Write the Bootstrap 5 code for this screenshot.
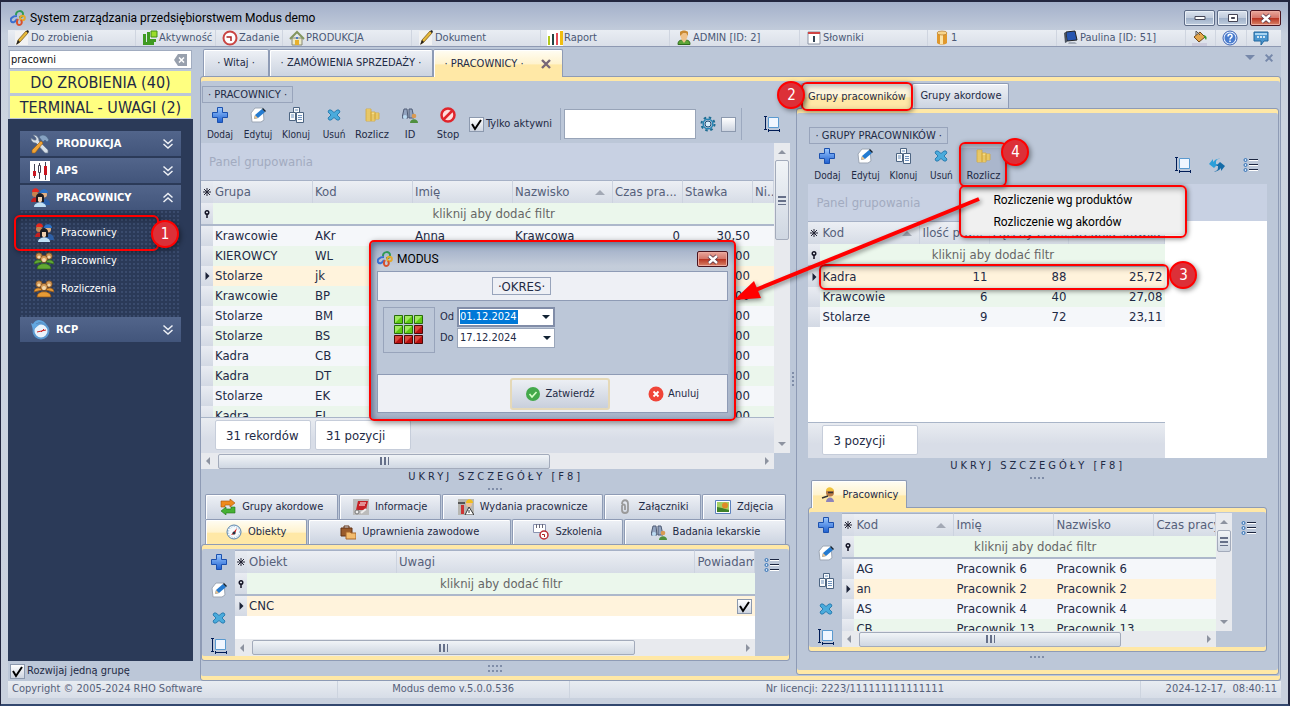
<!DOCTYPE html>
<html lang="pl">
<head>
<meta charset="utf-8">
<meta name="viewport" content="width=device-width, initial-scale=1">
<title>System zarządzania przedsiębiorstwem Modus demo</title>
<link href="https://cdn.jsdelivr.net/npm/bootstrap@5.3.0/dist/css/bootstrap.min.css" rel="stylesheet">
<style>
:root{--face:#bcc7d8;--line:#8e9bb5;--gold:#ffe8a6;--navy:#2b3a58;--ink:#1e2a45;--ui:"DejaVu Sans Condensed","Noto Sans",sans-serif;--title:Roboto,"Open Sans",sans-serif}
body{font-family:var(--ui);font-size:11px;line-height:16px;color:var(--ink);background:var(--face)}
button,input{font:inherit;color:inherit}
button{background:none;border:0;padding:0}
a{color:inherit;text-decoration:none}
svg{display:block;flex:none}
.i16{width:16px;height:16px}
.i20{width:20px;height:20px}
.shell{height:100vh;min-height:640px;border:2px solid #22263f;border-left-width:1px;border-bottom-color:#33486f;padding:0 7px 6px;background:linear-gradient(#a3b0ca 0,#c6cfdd 32px,#ccd4e0 120px,#c9d1de)}
.workarea{background:var(--face);min-height:0}
.titlebar{height:29px;font:12px/16px var(--title);color:#000;padding:3px 0 0 2px}
.winbtn{width:31px;height:16px;border:1px solid #5d6b86;border-radius:2px;background:linear-gradient(#dbe3ee,#c0cbdc 48%,#9fb0c9 52%,#c0cede);box-shadow:inset 0 0 0 1px #e8eef6}
.winbtn.closing{background:linear-gradient(#e8a79c,#d5766a 48%,#b83422 52%,#d98468);border-color:#4a1520;box-shadow:inset 0 0 0 1px #ecaa9f}
.quick{display:grid;grid-template-columns:128fr 80fr 67fr 129fr 129fr 129fr 130fr 128fr 129fr 129fr 30fr 31fr 34fr;height:17px;background:linear-gradient(#e9edf3,#dadfe8);color:#4a5876;border-bottom:1px solid #8e99b2}
.quick a{display:flex;align-items:center;gap:1px;padding-left:6px;border-right:1px solid #cfd5e0;white-space:nowrap}
.quick a:last-child{border:0}
.side{width:185px}
.findbox{height:19px;border:1px solid #a1acc0;background:#fff}
.findbox input{border:0;outline:0;width:100px;padding:0 1px;color:#111}
.notice{background:#ffff80;height:22px;font-size:16px;line-height:24px;text-align:center;margin:0 2px 3px}
.navtree{background:var(--navy);color:#fff;padding:12px 12px 0;margin-top:-2px}
.grp{height:25px;width:100%;background:linear-gradient(#52658b,#42557b);font-weight:700;padding:0 5px 0 10px;margin-bottom:2px;gap:6px;color:#fff}
.dotted{background:radial-gradient(#3a4b6d 1px,transparent 1px) 0 0/4px 4px;padding:9px 0 14px}
.leaf{height:28px;padding-left:14px;gap:7px}
.bubble{position:absolute;width:28px;height:28px;border:2px solid #f00;border-radius:50%;background:#dc3038;color:#fff;font-size:15px;line-height:24px;text-align:center;box-shadow:2px 2px 5px #0006;z-index:6}
.ring{position:absolute;border:2px solid #f00;border-radius:6px;box-shadow:1px 1px 5px #0007,inset 1px 2px 6px #0005;pointer-events:none;z-index:5}
.tabx{height:27px;border:1px solid var(--line);border-bottom:0;border-radius:2px 2px 0 0;background:linear-gradient(#eef1f6,#dde2eb 50%,#ccd4e1);box-shadow:inset 1px 1px #fff;display:flex;align-items:center;justify-content:center;color:var(--ink);white-space:nowrap}
.tabx.sel{background:linear-gradient(#fffdf4,#fff3cf 50%,#ffe8a6 56%,#ffe8a6);height:28px;margin-bottom:-1px;position:relative}
.goldtop{border:1px solid var(--line);border-radius:3px;box-shadow:inset 0 4px var(--gold),inset 0 -4px var(--gold);padding:5px 1px 4px 0}
.cap{border:1px solid #98a4bb;height:17px;line-height:15px;padding:0 5px;align-self:flex-start;white-space:nowrap}
.tool{width:38px;height:36px;display:flex;flex-direction:column;align-items:center;justify-content:space-between;font-size:10px;line-height:12px;padding-bottom:2px}
.tool.wider{font-size:11px}
.pressed{width:46px;background:#aab6cc;position:relative}
.sepv{width:1px;height:32px;background:#9ca9bf}
.chk{appearance:none;width:15px;height:15px;margin:0;border:1px solid #8c99ae;background:linear-gradient(#fff,#cdd4e0);flex:none}
.chk:checked{background:url("data:image/svg+xml,%3Csvg xmlns='http://www.w3.org/2000/svg' viewBox='0 0 13 13'%3E%3Cpath d='M2 6l3 5 6-9' fill='none' stroke='%23000' stroke-width='2'/%3E%3C/svg%3E"),linear-gradient(#fff,#cdd4e0)}
.gpanel{height:37px;background:#c8d1e3;color:#a2abc0;font-size:13px;line-height:38px;padding-left:8px}
.dgrid{table-layout:fixed;border-collapse:separate;border-spacing:0;font-size:13px;line-height:20px;color:var(--ink)}
.dgrid th,.dgrid td{padding:0 2px;overflow:hidden;white-space:nowrap;height:20px}
.dgrid th{font-weight:400;color:#55607a;height:23px;line-height:22px;border-top:1px solid #a6b1c6;border-right:1px solid #ccd3df;background:linear-gradient(#eceff4,#d6dce6);position:relative}
.dgrid .pin{width:12px;background:linear-gradient(#e9ecf2,#d3d9e4);padding:0;text-align:center;border-right:0}
.dgrid .flt td{background:#ebf7ec;color:#666;text-align:center;height:23px;border-bottom:2px solid #adb8cb}
.dgrid tr.a td{background:#f5f7fa}.dgrid tr.b td{background:#ebf6ec}.dgrid tr.s td{background:#fff3dc}
.dgrid tr td.pin{background:linear-gradient(#e9ecf2,#d3d9e4)}
.dgrid .num{text-align:right;padding-right:3px}
.asc::after{content:"";position:absolute;right:7px;top:9px;border:5px solid transparent;border-top:0;border-bottom-color:#a3a9b5}
.foot{background:linear-gradient(#e9ecf1,#d8dde7 60%);border-top:1px solid #a9b5c8;height:36px;padding:2px 0 0 14px;font-size:13px;gap:4px}
.foot span{background:#fff;border:1px solid #c6cdda;width:96px;height:30px;line-height:30px;padding-left:10px;border-radius:2px}
.hbar{height:17px;background:#e8eaee;display:flex;align-items:center;justify-content:space-between;padding:0 5px}
.thumb{background:linear-gradient(#f1f4f7,#cfd7e2);border:1px solid #a3abbb;border-radius:2px;height:15px;display:flex;align-items:center;justify-content:center}
.vbar{width:16px;flex:none;background:#e8eaee;display:flex;flex-direction:column;align-items:center;padding:7px 0}
.vbar .thumb{width:14px}
.lt,.rt,.up,.dn{border:4px solid transparent;width:0;height:0;flex:none}
.lt{border-left:0;border-right-color:#8d93a0}.rt{border-right:0;border-left-color:#8d93a0}.up{border-top:0;border-bottom-color:#8d93a0}.dn{border-bottom:0;border-top-color:#8d93a0}
.grip{width:9px;height:8px;background:repeating-linear-gradient(90deg,#667089 0 2px,transparent 2px 4px);flex:none}
.vbar .grip{width:8px;height:9px;background:repeating-linear-gradient(#667089 0 2px,transparent 2px 4px)}
.hide{letter-spacing:3px;text-align:center;height:16px;width:100%}
.dots{width:15px;height:2px;margin:0 auto;background:repeating-linear-gradient(90deg,#7f8da8 0 2px,transparent 2px 4px)}
.row1{display:grid;grid-template-columns:134fr 102fr 162fr 97fr 85fr;gap:1px}
.row2{display:grid;grid-template-columns:103fr 204fr 112fr 163fr;gap:1px}
.row1 .tabx,.row2 .tabx{height:25px;gap:6px}
.rail{width:33px;gap:12px;padding-top:4px;flex:none}
.listbtn{width:33px;flex:none;display:flex;justify-content:center;padding-top:7px}
.status{display:grid;grid-template-columns:330fr 232fr 572fr 140fr;height:17px;background:linear-gradient(#e9edf2,#d7dde7);color:#56617a}
.status span{padding:0 4px;border-right:1px solid #cdd4df;white-space:nowrap}
.dlg{position:absolute;left:176px;top:193px;width:367px;height:181px;z-index:4;border:2px solid #f00;border-radius:5px;background:linear-gradient(#9aa9c4,#c4cdda 24px,#bcc7d8 60px,#a9b5c9);box-shadow:2px 2px 6px #0007,inset 2px 2px 6px #5a6988;padding:6px}
.strip{background:#eef0f5;border:1px solid #8e9bb5}
.field{width:98px;height:20px;border:1px solid #9aa6ba;background:#fff;padding:0 3px 0 2px}
.field.on{border:2px solid #818da8;padding-left:1px}
.field input{border:0;outline:0;width:58px;padding:0;height:14px;line-height:14px}
.field.on input{background:#0078d7;color:#fff}
.okbtn{width:100px;height:32px;border:2px solid #e5d9b8;border-radius:3px;background:linear-gradient(#eceff4,#c8cfdc)}
.pop{position:absolute;left:0;top:39px;width:226px;height:48px;background:#f0f0f0;z-index:4;font:12px/22px var(--title);color:#000;padding:2px 0}
.pop a{display:block;text-align:left;padding-left:33px;height:22px}
.arrow{position:absolute;left:540px;top:148px;width:250px;height:110px;z-index:7;pointer-events:none;filter:drop-shadow(2px 2px 2px #0006)}
</style>
</head>
<body>
<svg width="0" height="0" class="position-absolute"><defs>
<linearGradient id="gb" x2="0" y2="1"><stop stop-color="#9cc9ff"/><stop offset="1" stop-color="#1e5fd0"/></linearGradient>
<symbol id="logo" viewBox="0 0 16 16"><g fill="none" stroke-width="2"><path d="M6 5c0-5 7-5 7-1s-3 3-4 3" stroke="#2f9a56"/><path d="M7 6c-5 0-7 3-6 5s4 2 6-2" stroke="#3b6fd0"/><circle cx="12.500" cy="8" r="2.300" stroke="#e5a92c"/><path d="M8 9c-2 3-1 6 1 6s4-2 2-5" stroke="#d8502c"/></g></symbol>
<symbol id="note" viewBox="0 0 16 16"><path d="M1 1h13v14H1z" fill="#f2f2f2"/><path d="M3 14l1-4 8-9 2 2-8 9z" fill="#e6b93a" stroke="#6b4a10" stroke-width=".7"/><path d="M2 15l2-5 2 2zM12 1l2-1 1 2-1 1z" fill="#222"/></symbol>
<symbol id="act" viewBox="0 0 16 16"><path d="M1 4h3v8h8v3H1zM5 2h3v7h6v3H5z" fill="#3f9a22"/><path d="M9 1h6v6H9z" fill="#9bdc2a" stroke="#438e18"/></symbol>
<symbol id="clk" viewBox="0 0 16 16"><circle cx="8" cy="8" r="6.500" fill="#fff" stroke="#c94442" stroke-width="2"/><path d="M4.500 7H9v4" fill="none" stroke="#a22" stroke-width="1.500"/></symbol>
<symbol id="house" viewBox="0 0 16 16"><path d="M3 8h10v7H3z" fill="#ecebc8" stroke="#887"/><path d="M1 9l7-7 7 7" fill="none" stroke="#83965f" stroke-width="2"/><path d="M6 10h4v5H6z" fill="#e8b02c"/><path d="M7 7h2v2H7z" fill="#4a7bc6"/></symbol>
<symbol id="bars" viewBox="0 0 16 16"><path d="M0 0h16v16H0z" fill="#fff"/><path d="M1 6h2v9H1z" fill="#b2c81c"/><path d="M5 4h2v11H5z" fill="#244"/><path d="M9 3h2v12H9z" fill="#e34c56"/><path d="M13 1h3v14h-3z" fill="#f0bd10"/></symbol>
<symbol id="usr" viewBox="0 0 16 16"><path d="M2 14.500c0-4 2-4.500 6-4.500s6 .5 6 4.500z" fill="#5ba436" stroke="#2f6b1c"/><path d="M5 9l3 4 3-4z" fill="#efc28a"/><circle cx="8" cy="6" r="3.500" fill="#efc28a"/><path d="M4 6V2c2-2 6-2 8 0v4l-2-3H7z" fill="#c98a33"/></symbol>
<symbol id="cal" viewBox="0 0 16 16"><path d="M2 2h12v12H2z" fill="#fff" stroke="#8b94a5"/><path d="M2 2h12v2H2z" fill="#cf4444"/><path d="M7 6h2v6H7z" fill="#345"/></symbol>
<symbol id="db" viewBox="0 0 16 16"><path d="M3 3v10c2 2 8 2 10 0V3z" fill="#e0982c"/><path d="M6 3h3v11H6z" fill="#fbe3a8"/><ellipse cx="8" cy="3" rx="5" ry="2" fill="#f8d58a" stroke="#a8681c" stroke-width=".6"/></symbol>
<symbol id="mon" viewBox="0 0 16 16"><path d="M3 2l9-1 2 9-10 1z" fill="#2856b0" stroke="#222"/><path d="M1 3l2-1 1 10-2 1z" fill="#4a525f"/><path d="M6 12h6l2 2H5z" fill="#a5adba"/></symbol>
<symbol id="bucket" viewBox="0 0 16 16"><path d="M0 13h15v3H0z" fill="#ccd"/><path d="M2 7l6-5 5 5-6 5z" fill="#e4a64c" stroke="#70491a"/><path d="M12 5c3 1 3 3 2 5l-2-3z" fill="#3b9a31"/><path d="M4 5V1l4 4" fill="none" stroke="#555"/></symbol>
<symbol id="help" viewBox="0 0 16 16"><circle cx="8" cy="8" r="7" fill="#e8f0ff" stroke="#355fb2"/><circle cx="8" cy="8" r="5.500" fill="#4a7dcf"/><path d="M6 6.500c0-3 4.500-3 4 0-.3 1.200-2 1.200-2 3M8 10.500v1.600" fill="none" stroke="#fff" stroke-width="1.500"/></symbol>
<symbol id="chat" viewBox="0 0 16 16"><path d="M1 2h14v9h-4l-3 4v-4H1z" fill="#4b96cf" stroke="#22679d"/><path d="M2 3h12v2H2z" fill="#a9d5f2"/><g fill="#fff"><circle cx="5" cy="7" r="1"/><circle cx="8" cy="7" r="1"/><circle cx="11" cy="7" r="1"/></g></symbol>
<symbol id="plus" viewBox="0 0 16 16"><path d="M5.500.5h5v5h5v5h-5v5h-5v-5h-5v-5h5z" fill="url(#gb)" stroke="#1b50ae"/></symbol>
<symbol id="edit" viewBox="0 0 16 16"><path d="M5 1h8l1 12-3 2H2L1 6z" fill="#fff" stroke="#9da7b5"/><path d="M4 12l1-4 7-6 3 3-7 6z" fill="#257bd0"/><path d="M4 12l1-4 3 3z" fill="#ecc28b"/><path d="M12 2l1-1 3 3-1 1z" fill="#123"/></symbol>
<symbol id="copy" viewBox="0 0 16 16"><g fill="#f8fafc" stroke="#4d6582"><path d="M5.500.5h6v9h-6z"/><path d="M1.500 5.500h6v8h-6z"/><path d="M8.500 5.500h7v10h-7z"/></g><path d="M3 8h3M3 10h3M10 8.500h4M10 10.500h4M10 12.500h4M7 3h3" stroke="#6f92bd"/></symbol>
<symbol id="del" viewBox="0 0 16 16"><path d="M3 3l2 0 3 2.500L11 3h2l1 2-3 3 3 3-1 2h-2L8 10.500 5 13H3l-1-2 3-3-3-3z" fill="#4aabdc" stroke="#2c7fb2"/></symbol>
<symbol id="coins" viewBox="0 0 16 16"><g fill="#f6dc85" stroke="#d3a83c" stroke-width=".8"><path d="M2 2h5v12H2zM7 5h4v9H7zM11 6h4v6h-4z"/><path d="M2 4h5M2 6h5M2 8h5M2 10h5M2 12h5M7 8h4M7 10h4M7 12h4M11 8h4M11 10h4"/></g></symbol>
<symbol id="bino" viewBox="0 0 16 16"><path d="M2 2h3l1 9H0zM7 2h3l2 9H7z" fill="#93a4c0" stroke="#4e5b74"/><circle cx="3" cy="10" r="2" fill="#bcdcf2"/><circle cx="12" cy="9" r="2.300" fill="#d99a53"/><path d="M8 16c0-5 8-5 8 0z" fill="#4f8f3d"/></symbol>
<symbol id="stop" viewBox="0 0 16 16"><circle cx="8" cy="8" r="6.500" fill="#fdd" stroke="#e0242b" stroke-width="2.500"/><path d="M3.500 12.500l9-9" stroke="#e0242b" stroke-width="2.500"/></symbol>
<symbol id="gear" viewBox="0 0 16 16"><circle cx="8" cy="8" r="6.500" fill="none" stroke="#1e6d92" stroke-width="2" stroke-dasharray="2.500 2.600"/><circle cx="8" cy="8" r="4.800" fill="none" stroke="#2585b5" stroke-width="1.500"/><circle cx="8" cy="8" r="3" fill="#d8eefa" stroke="#1c4d75"/></symbol>
<symbol id="size" viewBox="0 0 16 16"><path d="M4.500 1.500h10v10h-10z" fill="#f0f6ff" stroke="#5a9ad0"/><path d="M1.500 1v12M0 .5h3M0 13.500h3M5 14.500h10M4.500 13v3M15.500 13v3" stroke="#001c56"/></symbol>
<symbol id="sync" viewBox="0 0 16 16"><path d="M0 7l4-5v3c2-3 6-4 7-3-4 0-4 2-4 5h2l-4 4z" fill="#2c9fd9"/><path d="M16 9l-4 5v-3c-2 3-6 4-7 3 4 0 4-2 4-5H7l4-4z" fill="#156ca8"/></symbol>
<symbol id="list" viewBox="0 0 16 16"><g fill="#cfe2f7" stroke="#3170b4"><circle cx="2.500" cy="3" r="1.500"/><circle cx="2.500" cy="8" r="1.500"/><circle cx="2.500" cy="13" r="1.500"/></g><path d="M6 2.500h9M6 7.500h9M6 12.500h9" stroke="#1c2640"/><path d="M6 3.500h9M6 8.500h9M6 13.500h9" stroke="#fff"/></symbol>
<symbol id="tools" viewBox="0 0 20 20"><path d="M3 1l3 3v2H4L1 4c0 4 3 5 5 5l9 10h3v-3L9 7c0-3-2-6-6-6z" fill="#d7dfe8" stroke="#69798d" stroke-width=".7"/><path d="M9 3c3-3 6-2 8 0l2 3-2 2-2-2-2 2z" fill="#86a2c2" stroke="#47617f" stroke-width=".6"/><path d="M11 7l2 2L5 19H2v-3z" fill="#f0a436" stroke="#9b5a0e" stroke-width=".6"/></symbol>
<symbol id="aps" viewBox="0 0 20 20"><path d="M0 0h20v20H0z" fill="#fff"/><path d="M4.500 3v14M9.500 2v16M15.500 1v18" stroke="#445"/><path d="M3 10h3v5H3zM14 5h3v9h-3z" fill="#c9151f"/><path d="M8.500 4.500h2v7h-2z" fill="#fff" stroke="#445"/></symbol>
<symbol id="crew" viewBox="0 0 20 20"><path d="M1 14c0-6 8-6 8 0z" fill="#c41f1f"/><path d="M11 17c0-8 9-8 9 0z" fill="#2d5fa6"/><circle cx="5" cy="6" r="3" fill="#c58350"/><circle cx="14" cy="6.500" r="3" fill="#e3b184"/><path d="M2 4c0-5 7-5 7 0zM1 5h8z" fill="#e7281f"/><path d="M10 5c0-5 8-5 8 0z" fill="#2b72c8"/><path d="M6 14V9c0-5 8-5 8 0v5z" fill="#1c1c22"/><path d="M8 9h4v4l-2 2-2-2z" fill="#efcfae"/><path d="M4 19c0-6 12-6 12 0z" fill="#bfe0f6"/></symbol>
<symbol id="pg" viewBox="0 0 20 20"><g fill="#d49b58" stroke="#744319" stroke-width=".7"><circle cx="5" cy="5" r="3.200"/><circle cx="15" cy="5" r="3.200"/><circle cx="10" cy="8" r="3.600"/></g><g fill="#62a934" stroke="#356f18" stroke-width=".7"><path d="M0 13c0-5 7-5 8-2zM20 13c0-5-7-5-8-2zM3 18c0-7 14-7 14 0z"/></g><g fill="#f3d9ae"><circle cx="5" cy="6" r="1.600"/><circle cx="15" cy="6" r="1.600"/><circle cx="10" cy="9" r="2"/></g></symbol>
<symbol id="po" viewBox="0 0 20 20"><g fill="#d49b58" stroke="#744319" stroke-width=".7"><circle cx="5" cy="5" r="3.200"/><circle cx="15" cy="5" r="3.200"/><circle cx="10" cy="8" r="3.600"/></g><g fill="#e89b35" stroke="#935516" stroke-width=".7"><path d="M0 13c0-5 7-5 8-2zM20 13c0-5-7-5-8-2zM3 18c0-7 14-7 14 0z"/></g><g fill="#f3d9ae"><circle cx="5" cy="6" r="1.600"/><circle cx="15" cy="6" r="1.600"/><circle cx="10" cy="9" r="2"/></g></symbol>
<symbol id="rcp" viewBox="0 0 20 20"><circle cx="11" cy="11" r="7.500" fill="#eaf3fb" stroke="#5b99d0" stroke-width="2"/><path d="M1 3l2 7 6-5-3-1c4-3 9-1 11 2-3-7-11-8-14-2z" fill="#62a7e0"/><path d="M7 12l9-2M11 12l3-3" stroke="#c22"/></symbol>
<symbol id="dd" viewBox="0 0 16 16"><path d="M3.500 3.500l4.500 4 4.500-4M3.500 8l4.500 4 4.500-4" fill="none" stroke="#eef1f6" stroke-width="1.500"/></symbol>
<symbol id="du" viewBox="0 0 16 16"><path d="M3.500 7.500l4.500-4 4.500 4M3.500 12l4.500-4 4.500 4" fill="none" stroke="#eef1f6" stroke-width="1.500"/></symbol>
<symbol id="swap" viewBox="0 0 16 16"><path d="M1 8V2h9V0l5 4-5 4V6H5v2z" fill="#ef8a1c" stroke="#a4520c" stroke-width=".6"/><path d="M15 8v6H6v2l-5-4 5-4v2h5V8z" fill="#46b133" stroke="#1e7414" stroke-width=".6"/></symbol>
<symbol id="info" viewBox="0 0 16 16"><path d="M0 0h16v16H0z" fill="#bbb"/><path d="M5 2h10l-2 9H3z" fill="#c61f24"/><path d="M7 4h6M6 6h6" stroke="#fff"/><circle cx="4" cy="13" r="2" fill="#eee" stroke="#777"/><path d="M8 14l5-4" stroke="#eee" stroke-width="2"/></symbol>
<symbol id="haz" viewBox="0 0 16 16"><path d="M0 0h16v16H0z" fill="#b7b7b2"/><path d="M0 3h7v2H0z" fill="#555"/><path d="M3 6h3v9H3z" fill="#c33"/><circle cx="11" cy="5" r="3" fill="#eec296"/><path d="M8 4c0-5 7-5 7 0z" fill="#f0be1d"/><path d="M11 8l5 8H7z" fill="#fff" stroke="#333"/><path d="M11 11v3" stroke="#333"/></symbol>
<symbol id="clip" viewBox="0 0 16 16"><path d="M5 5c0-5 6-5 6 0v6c0 4-6 4-6 0V7c0-2 3-2 3 0v4" fill="none" stroke="#9a9a9a" stroke-width="1.800"/></symbol>
<symbol id="photo" viewBox="0 0 16 16"><path d="M.5 1.500h15v13H.5z" fill="#fff" stroke="#5b80bd"/><path d="M2 3h12v10H2z" fill="#a4cf63"/><path d="M2 8l5 1 7 2v2H2z" fill="#3f8129"/><circle cx="10" cy="6.500" r="3" fill="#e08a26"/></symbol>
<symbol id="gauge" viewBox="0 0 16 16"><circle cx="8" cy="8" r="7" fill="#f6fafc" stroke="#5782ac"/><circle cx="8" cy="8" r="5.500" fill="none" stroke="#8cb4d6" stroke-dasharray="1 1.500"/><path d="M5 11l6-7-2 6z" fill="#c22"/><circle cx="8" cy="9" r="1.500" fill="#234"/></symbol>
<symbol id="brief" viewBox="0 0 16 16"><path d="M1 4h11v8H1z" fill="#9a5b2c" stroke="#633314"/><path d="M4 4V2h5v2" fill="none" stroke="#633314"/><path d="M6 8h4l1 1h5v6H6z" fill="#f3bb6c" stroke="#a8662b"/></symbol>
<symbol id="sched" viewBox="0 0 16 16"><path d="M.5.5h12v8H.500z" fill="#fff" stroke="#8a93b0"/><path d="M3.500 0v4M6.500 0v4M9.500 0v4" stroke="#667"/><circle cx="11" cy="11" r="4" fill="#fff" stroke="#bb2c35" stroke-width="1.500"/><path d="M9 10.500h2.500V13" fill="none" stroke="#a22"/></symbol>
<symbol id="wrk" viewBox="0 0 16 16"><circle cx="9" cy="5.500" r="4" fill="#b97a44"/><path d="M5 4c0-5 7-5 8 0z" fill="#f0c33c"/><path d="M5 15c0-6 8-6 8 0z" fill="#8d84ba"/><path d="M1 11l6-2M7 5.500h5" stroke="#333" stroke-width="1.500"/></symbol>
<symbol id="ok" viewBox="0 0 16 16"><circle cx="8" cy="8" r="7" fill="#43a94b"/><path d="M4.500 8l2.500 3 4.500-5" fill="none" stroke="#d6ffc8" stroke-width="1.600"/></symbol>
<symbol id="no" viewBox="0 0 16 16"><circle cx="8" cy="8" r="7.500" fill="#f04438"/><path d="M5.500 5.500l5 5m0-5l-5 5" stroke="#fff" stroke-width="1.800"/></symbol>
<symbol id="xx" viewBox="0 0 12 12"><path d="M2 2l8 8m0-8l-8 8" stroke="currentColor" stroke-width="2.400"/></symbol>
<symbol id="xw" viewBox="0 0 12 12"><path d="M2 3l8 7m0-7l-8 7" stroke="#534" stroke-width="4"/><path d="M2 3l8 7m0-7l-8 7" stroke="#fff" stroke-width="2.400"/></symbol>
<symbol id="star" viewBox="0 0 8 8"><path d="M4 0v8M0 4h8M1 1l6 6M7 1L1 7" stroke="#223"/></symbol>
<symbol id="key" viewBox="0 0 8 8"><path d="M4 3.500V8" stroke="#112" stroke-width="1.500"/><circle cx="4" cy="2.500" r="1.800" fill="none" stroke="#112" stroke-width="1.400"/></symbol>
<symbol id="tri" viewBox="0 0 8 8"><path d="M2.500 0l4 4-4 4z" fill="#1b2338"/></symbol>
<symbol id="lights" viewBox="0 0 30 30"><g fill="#5ecb12" stroke="#286b0c"><path d="M.5.5h8v8h-8zM10.500.5h8v8h-8zM20.500.5h8v8h-8zM.5 10.500h8v8h-8zM10.500 10.500h8v8h-8z"/></g><g fill="#b80e0e" stroke="#4b0909"><path d="M20.500 10.500h8v8h-8zM.5 20.500h8v8h-8zM10.500 20.500h8v8h-8zM20.500 20.500h8v8h-8z"/></g><path d="M1 8V1h7zM11 8V1h7zM21 8V1h7zM1 18v-7h7zM11 18v-7h7z" fill="#a0e860"/><path d="M21 18v-7h7zM1 28v-7h7zM11 28v-7h7zM21 28v-7h7z" fill="#d84a40"/></symbol>
</defs></svg>

<div class="shell d-flex flex-column overflow-hidden">
  <header class="titlebar d-flex align-items-center">
    <svg class="i16 me-1"><use href="#logo"/></svg><span>System zarządzania przedsiębiorstwem Modus demo</span>
    <div class="ms-auto d-flex" style="gap:2px">
      <button class="winbtn d-flex align-items-center justify-content-center" aria-label="Minimalizuj"><svg width="12" height="6"><path d="M1 1.500h10v3H1z" fill="#fff" stroke="#445"/></svg></button>
      <button class="winbtn d-flex align-items-center justify-content-center" aria-label="Maksymalizuj"><svg width="12" height="10"><path d="M1.500 1.500h9v7h-9z" fill="#fff" stroke="#445"/><path d="M4.500 4.500h3v1h-3z" stroke="#445"/></svg></button>
      <button class="winbtn closing d-flex align-items-center justify-content-center" aria-label="Zamknij"><svg width="12" height="12"><use href="#xw"/></svg></button>
    </div>
  </header>
  <nav class="quick">
    <a href="#"><svg class="i16"><use href="#note"/></svg>Do zrobienia</a>
    <a href="#"><svg class="i16"><use href="#act"/></svg>Aktywność</a>
    <a href="#"><svg class="i16"><use href="#clk"/></svg>Zadanie</a>
    <a href="#"><svg class="i16"><use href="#house"/></svg>PRODUKCJA</a>
    <a href="#"><svg class="i16"><use href="#note"/></svg>Dokument</a>
    <a href="#"><svg class="i16"><use href="#bars"/></svg>Raport</a>
    <a href="#"><svg class="i16"><use href="#usr"/></svg>ADMIN [ID: 2]</a>
    <a href="#"><svg class="i16"><use href="#cal"/></svg>Słowniki</a>
    <a href="#"><svg class="i16"><use href="#db"/></svg>1</a>
    <a href="#"><svg class="i16"><use href="#mon"/></svg>Paulina [ID: 51]</a>
    <a href="#" aria-label="Kolory"><svg class="i16"><use href="#bucket"/></svg></a>
    <a href="#" aria-label="Pomoc"><svg class="i16"><use href="#help"/></svg></a>
    <a href="#" aria-label="Czat"><svg class="i16"><use href="#chat"/></svg></a>
  </nav>

  <div class="workarea d-flex flex-fill position-relative">
    <aside class="side d-flex flex-column flex-shrink-0" style="padding-top:3px">
      <div class="findbox d-flex align-items-center justify-content-between flex-shrink-0" style="margin:0 1px 2px;padding-right:3px"><input type="text" value="pracowni" aria-label="Szukaj"><svg width="14" height="12"><path d="M4 0h9v12H4L0 6z" fill="#98a0ad"/><path d="M5 3.500l5 5m0-5l-5 5" stroke="#fff" stroke-width="1.500"/></svg></div>
      <a href="#" class="notice d-block flex-shrink-0">DO ZROBIENIA (40)</a>
      <a href="#" class="notice d-block flex-shrink-0">TERMINAL - UWAGI (2)</a>
      <div class="navtree flex-fill">
        <button class="grp d-flex align-items-center"><svg class="i20"><use href="#tools"/></svg>PRODUKCJA<svg class="i16 ms-auto"><use href="#dd"/></svg></button>
        <button class="grp d-flex align-items-center"><svg class="i20"><use href="#aps"/></svg>APS<svg class="i16 ms-auto"><use href="#dd"/></svg></button>
        <button class="grp d-flex align-items-center mb-0"><svg class="i20"><use href="#crew"/></svg>PRACOWNICY<svg class="i16 ms-auto"><use href="#du"/></svg></button>
        <div class="dotted">
          <a href="#" class="leaf d-flex align-items-center position-relative"><svg class="i20"><use href="#crew"/></svg>Pracownicy<span class="ring" style="left:-6px;top:-4px;width:145px;height:36px"></span><span class="bubble" style="left:131px;top:1px">1</span></a>
          <a href="#" class="leaf d-flex align-items-center"><svg class="i20"><use href="#pg"/></svg>Pracownicy</a>
          <a href="#" class="leaf d-flex align-items-center"><svg class="i20"><use href="#po"/></svg>Rozliczenia</a>
        </div>
        <button class="grp d-flex align-items-center"><svg class="i20"><use href="#rcp"/></svg>RCP<svg class="i16 ms-auto"><use href="#dd"/></svg></button>
      </div>
      <label class="d-flex align-items-center flex-shrink-0" style="height:20px;padding-left:2px;gap:2px"><input type="checkbox" class="chk" checked>Rozwijaj jedną grupę</label>
    </aside>

    <main class="flex-fill d-flex flex-column position-relative" style="min-width:0;padding:2px 0 0 7px">
      <div class="d-flex" style="padding:0 6px 0 3px">
        <a href="#" class="tabx" style="width:66px">· Witaj ·</a>
        <a href="#" class="tabx" style="width:164px">· ZAMÓWIENIA SPRZEDAŻY ·</a>
        <a href="#" class="tabx sel gap-3" style="width:130px">· PRACOWNICY ·<svg width="12" height="12" style="color:#767"><use href="#xx"/></svg></a>
        <span class="ms-auto d-flex gap-2 pt-1" style="color:#7688aa"><i class="dn" style="margin-top:2px;border-width:5px 5px 0;border-top-color:#7688aa"></i><svg width="12" height="10"><use href="#xx"/></svg></span>
      </div>
      <div class="goldtop flex-fill d-flex" style="min-height:0">
        <!-- employees -->
        <section class="d-flex flex-column" style="flex:590 1 0;min-width:0;min-height:0">
          <div class="cap mt-1" style="margin-left:1px">· PRACOWNICY ·</div>
          <div class="d-flex align-items-start" style="height:40px;padding-top:4px">
            <button class="tool"><svg class="i16"><use href="#plus"/></svg>Dodaj</button>
            <button class="tool"><svg class="i16"><use href="#edit"/></svg>Edytuj</button>
            <button class="tool"><svg class="i16"><use href="#copy"/></svg>Klonuj</button>
            <button class="tool"><svg class="i16"><use href="#del"/></svg>Usuń</button>
            <button class="tool wider"><svg class="i16"><use href="#coins"/></svg>Rozlicz</button>
            <button class="tool wider"><svg class="i16"><use href="#bino"/></svg>ID</button>
            <button class="tool wider"><svg class="i16"><use href="#stop"/></svg>Stop</button>
            <div class="d-flex align-items-center flex-fill" style="height:34px;padding-left:2px">
              <label class="d-flex align-items-center text-nowrap" style="width:91px;gap:2px"><input type="checkbox" class="chk" checked>Tylko aktywni</label>
              <i class="sepv"></i>
              <input type="text" aria-label="Filtr" class="flex-shrink-0" style="width:132px;height:30px;border:1px solid #98a4b8;margin:0 4px 0 3px">
              <svg class="i16"><use href="#gear"/></svg>
              <input type="checkbox" class="chk" aria-label="Opcja" style="margin:0 5px">
              <i class="sepv"></i><button class="ms-auto" style="margin-right:10px" aria-label="Rozmiar"><svg class="i16"><use href="#size"/></svg></button>
            </div>
          </div>
          <div class="d-flex flex-fill" style="min-height:0">
            <div class="flex-fill d-flex flex-column bg-white" style="min-width:0">
              <div class="gpanel flex-shrink-0">Panel grupowania</div>
              <div class="flex-fill overflow-hidden" style="min-height:0;flex-basis:0">
                <table class="dgrid w-100">
                  <colgroup><col style="width:12px"><col style="width:100px"><col style="width:100px"><col style="width:100px"><col style="width:100px"><col style="width:70px"><col style="width:70px"><col></colgroup>
                  <thead><tr><th class="pin"><svg width="8" height="8" class="mx-auto"><use href="#star"/></svg></th><th>Grupa</th><th>Kod</th><th>Imię</th><th class="asc">Nazwisko</th><th>Czas pra...</th><th>Stawka</th><th>Ni..</th></tr></thead>
                  <tbody>
                  <tr class="flt"><td class="pin"><svg width="8" height="8" class="mx-auto"><use href="#key"/></svg></td><td colspan="7">kliknij aby dodać filtr</td></tr>
                  <tr class="a"><td class="pin"></td><td>Krawcowie</td><td>AKr</td><td>Anna</td><td>Krawcowa</td><td class="num">0</td><td class="num">30,50</td><td></td></tr>
                  <tr class="b"><td class="pin"></td><td>KIEROWCY</td><td>WL</td><td></td><td></td><td></td><td class="num">00</td><td></td></tr>
                  <tr class="s"><td class="pin"><svg width="8" height="8" class="mx-auto"><use href="#tri"/></svg></td><td>Stolarze</td><td>jk</td><td></td><td></td><td></td><td class="num">00</td><td></td></tr>
                  <tr class="b"><td class="pin"></td><td>Krawcowie</td><td>BP</td><td></td><td></td><td></td><td class="num">00</td><td></td></tr>
                  <tr class="a"><td class="pin"></td><td>Stolarze</td><td>BM</td><td></td><td></td><td></td><td class="num">00</td><td></td></tr>
                  <tr class="b"><td class="pin"></td><td>Stolarze</td><td>BS</td><td></td><td></td><td></td><td class="num">00</td><td></td></tr>
                  <tr class="a"><td class="pin"></td><td>Kadra</td><td>CB</td><td></td><td></td><td></td><td class="num">00</td><td></td></tr>
                  <tr class="b"><td class="pin"></td><td>Kadra</td><td>DT</td><td></td><td></td><td></td><td class="num">00</td><td></td></tr>
                  <tr class="a"><td class="pin"></td><td>Stolarze</td><td>EK</td><td></td><td></td><td></td><td class="num">00</td><td></td></tr>
                  <tr class="b"><td class="pin"></td><td>Kadra</td><td>EL</td><td></td><td></td><td></td><td class="num">00</td><td></td></tr>
                  </tbody>
                </table>
              </div>
              <div class="foot d-flex flex-shrink-0"><span>31 rekordów</span><span>31 pozycji</span></div>
            </div>
            <div class="vbar"><i class="up"></i><div class="thumb" style="height:80px;margin-top:6px"><i class="grip"></i></div><i class="dn mt-auto"></i></div>
          </div>
          <div class="hbar" style="margin-right:16px"><i class="lt"></i><div class="thumb me-auto ms-2" style="width:59%"><i class="grip"></i></div><i class="rt"></i></div>
          <button class="hide">UKRYJ SZCZEGÓŁY [F8]</button>
          <div class="dots" style="margin-top:3px"></div>
          <div style="padding:4px 4px 0">
            <div class="row1">
              <a href="#" class="tabx"><svg class="i16"><use href="#swap"/></svg>Grupy akordowe</a>
              <a href="#" class="tabx"><svg class="i16"><use href="#info"/></svg>Informacje</a>
              <a href="#" class="tabx"><svg class="i16"><use href="#haz"/></svg>Wydania pracownicze</a>
              <a href="#" class="tabx"><svg class="i16"><use href="#clip"/></svg>Załączniki</a>
              <a href="#" class="tabx"><svg class="i16"><use href="#photo"/></svg>Zdjęcia</a>
            </div>
            <div class="row2">
              <a href="#" class="tabx sel"><svg class="i16"><use href="#gauge"/></svg>Obiekty</a>
              <a href="#" class="tabx"><svg class="i16"><use href="#brief"/></svg>Uprawnienia zawodowe</a>
              <a href="#" class="tabx"><svg class="i16"><use href="#sched"/></svg>Szkolenia</a>
              <a href="#" class="tabx"><svg class="i16"><use href="#bino"/></svg>Badania lekarskie</a>
            </div>
          </div>
          <div class="goldtop d-flex" style="height:120px">
            <div class="rail d-flex flex-column align-items-center overflow-hidden">
              <button aria-label="Dodaj"><svg class="i16"><use href="#plus"/></svg></button><button aria-label="Edytuj"><svg class="i16"><use href="#edit"/></svg></button><button aria-label="Usuń"><svg class="i16"><use href="#del"/></svg></button><button aria-label="Rozmiar"><svg class="i16"><use href="#size"/></svg></button>
            </div>
            <div class="flex-fill d-flex flex-column bg-white" style="min-width:0">
              <table class="dgrid w-100">
                <colgroup><col style="width:12px"><col style="width:150px"><col><col style="width:60px"></colgroup>
                <thead><tr><th class="pin"><svg width="8" height="8" class="mx-auto"><use href="#star"/></svg></th><th>Obiekt</th><th>Uwagi</th><th>Powiadamiaj</th></tr></thead>
                <tbody><tr class="flt"><td class="pin"><svg width="8" height="8" class="mx-auto"><use href="#key"/></svg></td><td colspan="3">kliknij aby dodać filtr</td></tr>
                <tr class="s"><td class="pin"><svg width="8" height="8" class="mx-auto"><use href="#tri"/></svg></td><td>CNC</td><td></td><td class="num"><input type="checkbox" class="chk align-middle" checked aria-label="Powiadamiaj"></td></tr></tbody>
              </table>
              <div class="hbar mt-auto"><i class="lt"></i><div class="thumb me-auto ms-2" style="width:75%"><i class="grip"></i></div><i class="rt"></i></div>
            </div>
            <button class="listbtn" aria-label="Lista"><svg class="i16"><use href="#list"/></svg></button>
          </div>
          <div class="dots" style="margin-top:4px"></div><div class="dots" style="margin:3px auto 4px"></div>
        </section>
        <div class="d-flex align-items-center flex-shrink-0" style="width:6px"><i style="width:2px;height:15px;margin-left:2px;background:repeating-linear-gradient(#7f8da8 0 2px,transparent 2px 4px)"></i></div>
        <!-- groups -->
        <section class="d-flex flex-column" style="flex:483 1 0;min-width:0;padding:1px 0">
          <div class="d-flex" style="padding-left:5px">
            <a href="#" class="tabx sel" style="width:111px;height:26px">Grupy pracowników<span class="ring" style="left:-1px;top:-2px;width:112px;height:29px"></span><span class="bubble" style="left:-25px;top:-3px">2</span></a>
            <a href="#" class="tabx" style="width:97px;height:25px">Grupy akordowe</a>
          </div>
          <div class="goldtop flex-fill d-flex flex-column" style="padding:18px 11px 20px;min-height:0">
            <div class="cap" style="margin-left:1px">· GRUPY PRACOWNIKÓW ·</div>
            <div class="d-flex align-items-start flex-shrink-0" style="height:40px;padding-top:4px">
              <button class="tool"><svg class="i16"><use href="#plus"/></svg>Dodaj</button>
              <button class="tool"><svg class="i16"><use href="#edit"/></svg>Edytuj</button>
              <button class="tool"><svg class="i16"><use href="#copy"/></svg>Klonuj</button>
              <button class="tool"><svg class="i16"><use href="#del"/></svg>Usuń</button>
              <div class="pressed">
                <button class="tool wider w-100"><svg class="i16"><use href="#coins"/></svg>Rozlicz</button>
                <span class="ring" style="left:-1px;top:-6px;width:48px;height:45px"></span><span class="bubble" style="left:41px;top:-10px">4</span>
                <div class="pop"><a href="#">Rozliczenie wg produktów</a><a href="#">Rozliczenie wg akordów</a></div>
                <span class="ring" style="left:-1px;top:37px;width:228px;height:53px"></span>
              </div>
              <div class="ms-auto d-flex align-items-center pe-2" style="gap:18px;height:34px">
                <button aria-label="Rozmiar"><svg class="i16"><use href="#size"/></svg></button><button aria-label="Odśwież"><svg class="i16"><use href="#sync"/></svg></button><button aria-label="Lista"><svg class="i16"><use href="#list"/></svg></button>
              </div>
            </div>
            <div class="flex-fill d-flex flex-column bg-white" style="min-height:0">
              <div class="gpanel flex-shrink-0">Panel grupowania</div>
              <table class="dgrid" style="width:357px">
                <colgroup><col style="width:12px"><col style="width:100px"><col style="width:70px"><col style="width:79px"><col></colgroup>
                <thead><tr><th class="pin"><svg width="8" height="8" class="mx-auto"><use href="#star"/></svg></th><th class="asc">Kod</th><th>Ilość pra...</th><th>Łączny cza...</th><th>Średnia stawka</th></tr></thead>
                <tbody>
                <tr class="flt"><td class="pin"><svg width="8" height="8" class="mx-auto"><use href="#key"/></svg></td><td colspan="4">kliknij aby dodać filtr</td></tr>
                <tr class="s"><td class="pin"><svg width="8" height="8" class="mx-auto"><use href="#tri"/></svg></td><td class="position-relative overflow-visible">Kadra<span class="ring" style="left:-1px;top:-3px;width:350px;height:26px"></span><span class="bubble" style="left:349px;top:-6px">3</span></td><td class="num">11</td><td class="num">88</td><td class="num">25,72</td></tr>
                <tr class="b"><td class="pin"></td><td>Krawcowie</td><td class="num">6</td><td class="num">40</td><td class="num">27,08</td></tr>
                <tr class="a"><td class="pin"></td><td>Stolarze</td><td class="num">9</td><td class="num">72</td><td class="num">23,11</td></tr>
                </tbody>
              </table>
              <div class="foot mt-auto d-flex" style="width:357px"><span>3 pozycji</span></div>
            </div>
            <button class="hide">UKRYJ SZCZEGÓŁY [F8]</button>
            <div class="dots" style="margin-top:3px"></div>
            <div class="d-flex" style="padding:1px 3px 0"><a href="#" class="tabx sel" style="width:96px;gap:6px"><svg class="i16"><use href="#wrk"/></svg>Pracownicy</a></div>
            <div class="goldtop d-flex flex-shrink-0" style="height:145px">
              <div class="rail d-flex flex-column align-items-center overflow-hidden">
                <button aria-label="Dodaj"><svg class="i16"><use href="#plus"/></svg></button><button aria-label="Edytuj"><svg class="i16"><use href="#edit"/></svg></button><button aria-label="Klonuj"><svg class="i16"><use href="#copy"/></svg></button><button aria-label="Usuń"><svg class="i16"><use href="#del"/></svg></button><button aria-label="Rozmiar"><svg class="i16"><use href="#size"/></svg></button>
              </div>
              <div class="flex-fill d-flex flex-column" style="min-width:0">
                <div class="d-flex flex-fill overflow-hidden" style="min-height:0;flex-basis:0">
                  <div class="flex-fill overflow-hidden" style="min-width:0">
                    <table class="dgrid w-100">
                      <colgroup><col style="width:12px"><col style="width:100px"><col style="width:100px"><col style="width:100px"><col></colgroup>
                      <thead><tr><th class="pin"><svg width="8" height="8" class="mx-auto"><use href="#star"/></svg></th><th class="asc">Kod</th><th>Imię</th><th>Nazwisko</th><th>Czas pracy</th></tr></thead>
                      <tbody>
                      <tr class="flt"><td class="pin"><svg width="8" height="8" class="mx-auto"><use href="#key"/></svg></td><td colspan="4">kliknij aby dodać filtr</td></tr>
                      <tr class="a"><td class="pin"></td><td>AG</td><td>Pracownik 6</td><td>Pracownik 6</td><td></td></tr>
                      <tr class="s"><td class="pin"><svg width="8" height="8" class="mx-auto"><use href="#tri"/></svg></td><td>an</td><td>Pracownik 2</td><td>Pracownik 2</td><td></td></tr>
                      <tr class="a"><td class="pin"></td><td>AS</td><td>Pracownik 4</td><td>Pracownik 4</td><td></td></tr>
                      <tr class="b"><td class="pin"></td><td>CB</td><td>Pracownik 13</td><td>Pracownik 13</td><td></td></tr>
                      </tbody>
                    </table>
                  </div>
                  <div class="vbar"><i class="up"></i><div class="thumb" style="height:22px;margin-top:6px"><i class="grip"></i></div><i class="dn mt-auto"></i></div>
                </div>
                <div class="hbar" style="margin-right:16px"><i class="lt"></i><div class="thumb me-auto ms-2" style="width:72%"><i class="grip"></i></div><i class="rt"></i></div>
              </div>
              <button class="listbtn" aria-label="Lista"><svg class="i16"><use href="#list"/></svg></button>
            </div>
            <div class="dots" style="margin-top:4px;margin-bottom:-4px"></div>
          </div>
        </section>
      </div>

      <div class="dlg d-flex flex-column" role="dialog" aria-label="MODUS">
        <div class="d-flex align-items-center" style="height:22px;font:12px/16px var(--title);color:#000"><svg class="i16 me-1"><use href="#logo"/></svg>MODUS<button class="winbtn closing ms-auto d-flex align-items-center justify-content-center" aria-label="Zamknij"><svg width="12" height="12"><use href="#xw"/></svg></button></div>
        <div class="strip d-flex justify-content-center align-items-center" style="height:30px;padding-right:62px;margin-top:1px"><span class="cap align-self-center" style="font-size:13px;height:18px;line-height:17px">·OKRES·</span></div>
        <div class="flex-fill d-flex" style="background:var(--face);padding:6px 6px 0;gap:5px">
          <div class="d-flex align-items-center justify-content-center" style="width:52px;height:46px;border:1px solid #98a4bb"><svg width="30" height="30"><use href="#lights"/></svg></div>
          <div>
            <div class="d-flex align-items-center" style="height:19px;margin-bottom:2px"><label for="od" style="width:17px">Od</label><span class="field on d-flex align-items-center justify-content-between"><input id="od" type="text" value="01.12.2024"><i class="dn" style="border-top-color:#123"></i></span></div>
            <div class="d-flex align-items-center" style="height:20px"><label for="do" style="width:17px">Do</label><span class="field d-flex align-items-center justify-content-between"><input id="do" type="text" value="17.12.2024"><i class="dn" style="border-top-color:#123"></i></span></div>
          </div>
        </div>
        <div class="strip d-flex align-items-center justify-content-end" style="height:39px;padding-right:28px">
          <button class="okbtn d-flex align-items-center justify-content-center gap-1"><svg class="i16"><use href="#ok"/></svg>Zatwierdź</button>
          <button class="d-flex align-items-center gap-1" style="margin-left:38px"><svg class="i16"><use href="#no"/></svg>Anuluj</button>
        </div>
      </div>
      <svg class="arrow" viewBox="0 0 250 110"><path d="M246 4L20 96" stroke="#f00" stroke-width="4"/><path d="M1 105l20-19 7 17z" fill="#f00"/></svg>
    </main>
  </div>
  <footer class="status flex-shrink-0"><span>Copyright © 2005-2024 RHO Software</span><span class="text-center">Modus demo v.5.0.0.536</span><span class="text-center">Nr licencji: 2223/111111111111111</span><span class="text-end border-0">2024-12-17,&nbsp; 08:40:11</span></footer>
</div>
<script src="https://cdn.jsdelivr.net/npm/bootstrap@5.3.0/dist/js/bootstrap.bundle.min.js"></script>
</body>
</html>
